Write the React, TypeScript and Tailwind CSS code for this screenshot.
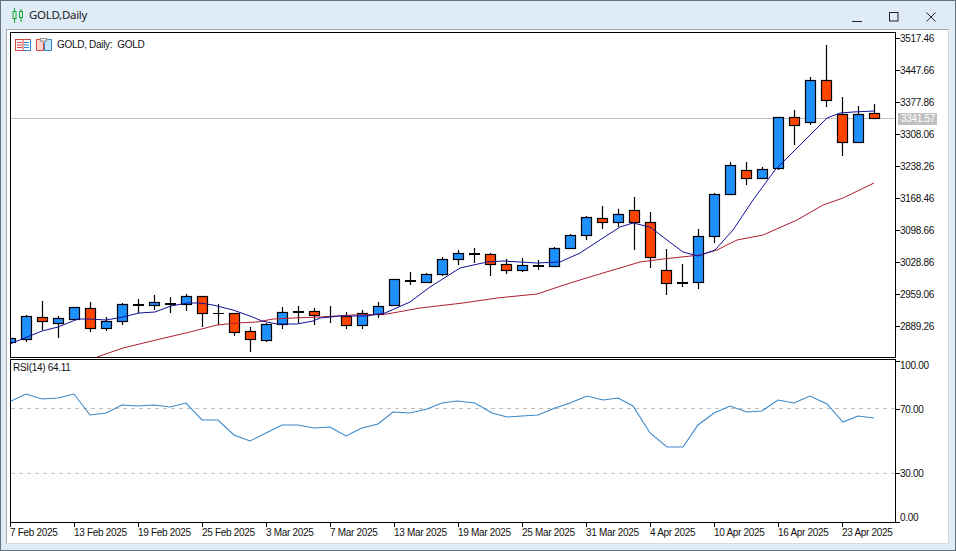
import React from "react";

type Candle = [number, number, number, number, number, "u" | "d" | "x" | "t"];

const FONT = "font-['Liberation_Sans',Arial,sans-serif]";

// x, high, body top, body bottom, low, kind
const candles: Candle[] = [
  [10, 338, 338, 342, 342, "u"],
  [26, 315, 316, 339, 342, "u"],
  [42, 301, 317, 321, 330, "d"],
  [58, 316, 318, 323, 338, "u"],
  [74, 307, 307, 319, 319, "u"],
  [90, 302, 308, 328, 332, "d"],
  [106, 317, 321, 328, 331, "u"],
  [122, 303, 304, 321, 325, "u"],
  [138, 299, 304, 305, 313, "x"],
  [154, 295, 302, 305, 310, "u"],
  [170, 297, 303, 304, 313, "x"],
  [186, 294, 296, 304, 311, "u"],
  [202, 296, 296, 313, 327, "d"],
  [218, 304, 313, 313, 325, "t"],
  [234, 313, 313, 332, 336, "d"],
  [250, 327, 331, 339, 352, "d"],
  [266, 323, 324, 340, 342, "u"],
  [282, 307, 312, 324, 329, "u"],
  [298, 306, 311, 312, 323, "x"],
  [314, 308, 311, 315, 325, "d"],
  [330, 306, 316, 316, 323, "t"],
  [346, 312, 316, 325, 329, "d"],
  [362, 310, 313, 325, 329, "u"],
  [378, 302, 306, 314, 318, "u"],
  [394, 279, 279, 305, 305, "u"],
  [410, 272, 280, 281, 285, "x"],
  [426, 273, 274, 282, 282, "u"],
  [442, 257, 259, 274, 276, "u"],
  [458, 250, 253, 259, 265, "u"],
  [474, 248, 253, 254, 263, "x"],
  [490, 253, 254, 264, 276, "d"],
  [506, 259, 264, 270, 274, "d"],
  [522, 258, 265, 270, 272, "u"],
  [538, 260, 265, 266, 270, "x"],
  [554, 247, 248, 266, 266, "u"],
  [570, 234, 235, 248, 249, "u"],
  [586, 216, 217, 235, 240, "u"],
  [602, 206, 218, 222, 229, "d"],
  [618, 209, 214, 222, 227, "u"],
  [634, 197, 210, 222, 250, "d"],
  [650, 212, 222, 257, 268, "d"],
  [666, 249, 270, 283, 295, "d"],
  [682, 264, 282, 283, 287, "x"],
  [698, 229, 236, 282, 289, "u"],
  [714, 193, 194, 236, 243, "u"],
  [730, 162, 165, 194, 194, "u"],
  [746, 162, 170, 178, 185, "d"],
  [762, 167, 169, 178, 178, "u"],
  [778, 117, 117, 168, 170, "u"],
  [794, 110, 117, 125, 145, "d"],
  [810, 77, 80, 122, 125, "u"],
  [826, 45, 80, 100, 107, "d"],
  [842, 97, 114, 142, 156, "d"],
  [858, 106, 114, 142, 142, "u"],
  [874, 104, 113, 118, 118, "d"],
];

const fastMa =
  "10,344 22,339 42,331 58,327 78,319 90,319 106,320 123,317 139,313 155,312 171,306 187,303 200,303 213,305 233,310 250,316 262,321 277,324 297,324 313,321 320,318 340,316 367,316 385,313 410,302 430,287 460,268 487,262 503,261 537,263 560,262 580,253 603,238 620,227 633,223 650,227 667,240 683,252 698,256 715,250 733,230 753,200 775,170 790,155 827,118 840,113 853,112 874,111";

const slowMa =
  "97,357 123,348 160,339 190,332 217,325 237,323 257,322 273,319 293,318 320,317 353,315 387,314 420,308 463,303 497,298 537,294 570,283 603,273 640,262 663,259 700,255 717,250 737,240 763,235 797,220 823,205 843,198 874,183";

const rsi =
  "11,401 26,394 42,399 58,398 74,394 90,415 106,413 122,405 138,406 154,405 170,407 186,403 202,420 218,420 234,435 250,441 266,433 282,425 298,425 314,428 330,427 346,436 362,428 378,424 393,412 410,413 427,409 442,403 457,401 475,403 492,413 507,417 522,416 538,415 555,408 570,403 587,396 603,400 618,398 633,406 650,433 667,447 683,447 698,425 714,413 730,406 747,412 762,411 778,400 794,403 810,396 827,404 843,422 858,416 874,418";

const prices = [
  "3517.46",
  "3447.66",
  "3377.86",
  "3308.06",
  "3238.26",
  "3168.46",
  "3098.66",
  "3028.86",
  "2959.06",
  "2889.26",
];

const dates = [
  "7 Feb 2025",
  "13 Feb 2025",
  "19 Feb 2025",
  "25 Feb 2025",
  "3 Mar 2025",
  "7 Mar 2025",
  "13 Mar 2025",
  "19 Mar 2025",
  "25 Mar 2025",
  "31 Mar 2025",
  "4 Apr 2025",
  "10 Apr 2025",
  "16 Apr 2025",
  "23 Apr 2025",
];

const CandleMark: React.FC<{ c: Candle }> = ({ c }) => {
  const [x, high, top, bottom, low, kind] = c;
  const cx = x + 0.5;
  if (kind === "x" || kind === "t") {
    return (
      <g stroke="#000" fill="none">
        <line x1={cx} x2={cx} y1={high} y2={low} strokeWidth={1.2} />
        <line
          x1={x - 5}
          x2={x + 6}
          y1={kind === "x" ? top + 1 : top + 0.5}
          y2={kind === "x" ? top + 1 : top + 0.5}
          strokeWidth={kind === "x" ? 2 : 1}
        />
      </g>
    );
  }
  return (
    <g stroke="#000" strokeWidth={1.2}>
      <line x1={cx} x2={cx} y1={high} y2={low} />
      <rect
        x={x - 4.5}
        y={top + 0.5}
        width={10}
        height={bottom - top}
        fill={kind === "u" ? "#1e90ff" : "#ff4500"}
      />
    </g>
  );
};

const ListIcon = () => (
  <svg width="16" height="12" viewBox="0 0 16 12" fill="none">
    <rect x="0.5" y="0.5" width="15" height="11" fill="#fff" stroke="#d8473e" />
    <path d="M15.5 0.5v11H8" stroke="#2f86cf" />
    <path d="M2 3.5h5M2 6h5M2 8.5h5" stroke="#e0433a" />
    <path d="M8 0.5v11" stroke="#d8473e" />
    <path d="M9 3.5h5M9 6h5M9 8.5h5" stroke="#2f86cf" />
  </svg>
);

const TemplateIcon = () => (
  <svg width="16" height="13" viewBox="0 0 16 13" fill="none">
    <path d="M0.5 1.5h4l3 3v8h-7z" fill="#fbd5cd" stroke="#d8473e" />
    <path d="M8.5 12.5v-8l3-3h4v11z" fill="#c6e3f8" stroke="#2f86cf" />
    <rect x="4.5" y="0.5" width="6" height="2.5" fill="#fff" stroke="#8f8f8f" />
  </svg>
);

const App: React.FC = () => {
  return (
    <div
      className={`${FONT} w-[956px] h-[551px] flex flex-col border border-[#66737f] bg-[#dfebf7] pl-[5px] pr-[6px] pb-[6px] text-[#111] overflow-hidden`}
    >
      <div className="h-[28px] shrink-0 flex items-center justify-between">
        <div className="flex items-center gap-[5px] pl-[6px]">
          <svg width="12" height="15" viewBox="0 0 12 15" fill="none" stroke="#17a63a">
            <path d="M2.5 0v15M9 1v13" />
            <rect x="1" y="3.5" width="3" height="7" fill="#dff3e2" />
            <rect x="7.5" y="3.5" width="3" height="6" fill="#dff3e2" />
          </svg>
          <span className="font-['Noto_Sans',sans-serif] text-[11.5px] tracking-[-0.3px] text-[#222]">GOLD,Daily</span>
        </div>
        <div className="flex">
          <div className="w-[37px] h-[28px] flex items-center justify-center">
            <svg width="10" height="10" viewBox="0 0 10 10" className="mt-[3px]">
              <path d="M0 9.5h10" stroke="#222" />
            </svg>
          </div>
          <div className="w-[37px] h-[28px] flex items-center justify-center">
            <svg width="10" height="10" viewBox="0 0 10 10" fill="none" className="mt-[3px]">
              <rect x="0.5" y="0.5" width="8.5" height="8.5" stroke="#222" />
            </svg>
          </div>
          <div className="w-[37px] h-[28px] flex items-center justify-center">
            <svg width="10" height="10" viewBox="0 0 10 10" fill="none" className="mt-[3px]">
              <path d="M0.5 0.5l9 9M9.5 0.5l-9 9" stroke="#222" />
            </svg>
          </div>
        </div>
      </div>

      <div className="flex-1 flex flex-col bg-white border border-t-[#a3a9af] border-l-[#a3a9af] border-r-[#d5dadf] border-b-[#d5dadf] pl-[3px] pt-[2px] overflow-hidden">
        {/* price pane */}
        <div className="flex h-[326px] shrink-0">
          <div className="relative w-[886px] border border-black shrink-0 overflow-hidden">
            <svg width="884" height="324" viewBox="11 33 884 324" className="block">
              <line x1="11" x2="895" y1="118.5" y2="118.5" stroke="#c0c0c0" />
              {candles.map((c) => (
                <CandleMark key={c[0]} c={c} />
              ))}
              <polyline points={slowMa} fill="none" stroke="#b01e32" strokeWidth="1" />
              <polyline points={fastMa} fill="none" stroke="#10109a" strokeWidth="1" />
            </svg>
            <div className="absolute left-[4px] top-[5px] flex items-center text-[10px] tracking-[-0.3px] leading-[12px]">
              <ListIcon />
              <span className="ml-[5px]">
                <TemplateIcon />
              </span>
              <span className="ml-[5px]">GOLD, Daily:&nbsp; GOLD</span>
            </div>
          </div>
          <div className="relative flex-1 flex flex-col gap-5 text-[10px] tracking-[-0.3px] leading-[12px]">
            {prices.map((p) => (
              <div key={p} className="flex items-center h-[12px]">
                <span className="w-[4px] h-px bg-black" />
                <span className="translate-y-px">{p}</span>
              </div>
            ))}
            <div className="absolute left-[2px] top-[81px] w-[39px] h-[12px] bg-[#c0c0c0] text-white pl-[3px]">
              3341.57
            </div>
          </div>
        </div>

        {/* RSI pane */}
        <div className="flex h-[164px] mt-px shrink-0">
          <div className="relative w-[886px] border border-black shrink-0 overflow-hidden">
            <svg width="884" height="162" viewBox="11 360 884 162" className="block">
              <line x1="11" x2="895" y1="408.5" y2="408.5" stroke="#c0c0c0" strokeDasharray="4 4" />
              <line x1="11" x2="895" y1="473.5" y2="473.5" stroke="#c0c0c0" strokeDasharray="4 4" />
              <polyline points={rsi} fill="none" stroke="#3a88c8" strokeWidth="1.1" />
            </svg>
            <span className="absolute left-[2px] top-[2px] text-[10px] tracking-[-0.3px] leading-[12px]">RSI(14) 64.11</span>
          </div>
          <div className="flex-1 flex flex-col text-[10px] tracking-[-0.3px] leading-[12px]">
            <div className="flex h-[12px]">
              <span className="w-[4px] h-px bg-black mt-[2px]" />
              <span className="translate-y-px">100.00</span>
            </div>
            <div className="flex items-center h-[12px] mt-[32px]">
              <span className="w-[4px] h-px bg-black" />
              <span className="translate-y-px">70.00</span>
            </div>
            <div className="flex items-center h-[12px] mt-[52px]">
              <span className="w-[4px] h-px bg-black" />
              <span className="translate-y-px">30.00</span>
            </div>
            <div className="flex h-[12px] mt-[32px]">
              <span className="w-[4px] h-px bg-black self-end" />
              <span className="translate-y-px">0.00</span>
            </div>
          </div>
        </div>

        {/* time axis */}
        <div className="flex text-[10px] tracking-[-0.3px] leading-[12px]">
          {dates.map((d) => (
            <div key={d} className="w-16 shrink-0 flex flex-col whitespace-nowrap">
              <span className="w-px h-[4px] bg-black" />
              <span>{d}</span>
            </div>
          ))}
        </div>
      </div>
    </div>
  );
};

export default App;
